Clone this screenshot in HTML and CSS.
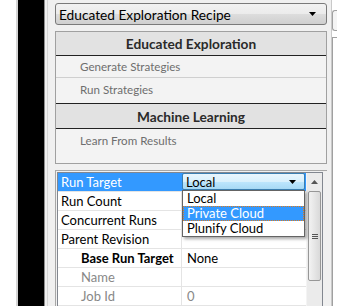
FILE: index.html
```html
<!DOCTYPE html>
<html>
<head>
<meta charset="utf-8">
<link rel="stylesheet" href="styles.css">
</head>
<body>
<div class="app">
  <div class="gutter"></div>
  <div class="dark"></div>
  <div class="main">
    <div class="inner">
      <div class="combo">
        <span>Educated Exploration Recipe</span>
        <svg class="arrow" width="8" height="4" viewBox="0 0 8 4"><path d="M0 0H7L3.5 4Z" fill="#000"/></svg>
      </div>
      <div class="panel">
        <div class="hdr">Educated Exploration</div>
        <div class="item">Generate Strategies</div>
        <div class="item last">Run Strategies</div>
        <div class="hdr hdr2">Machine Learning</div>
        <div class="item tall">Learn From Results</div>
      </div>
      <div class="gridwrap">
        <div class="grid">
          <div class="rows">
            <div class="row sel"><div class="k">Run Target</div><div class="v"></div></div>
            <div class="row"><div class="k">Run Count</div><div class="v"></div></div>
            <div class="row"><div class="k">Concurrent Runs</div><div class="v"></div></div>
            <div class="row"><div class="k">Parent Revision</div><div class="v"></div></div>
            <div class="row"><div class="k sub b">Base Run Target</div><div class="v">None</div></div>
            <div class="row"><div class="k sub g">Name</div><div class="v"></div></div>
            <div class="row"><div class="k sub g">Job Id</div><div class="v g">0</div></div>
          </div>
          <div class="scroll">
            <svg class="up" width="7" height="4" viewBox="0 0 7 4"><path d="M0 4H7L3.5 0Z" fill="#555"/></svg>
            <div class="thumb"><div class="grip"><i></i><i></i><i></i></div></div>
          </div>
          <div class="cellcombo">
            <span>Local</span>
            <svg width="8" height="4" viewBox="0 0 8 4"><path d="M0 0H7L3.5 4Z" fill="#000"/></svg>
          </div>
          <div class="list">
            <div class="opt">Local</div>
            <div class="opt hl">Private Cloud</div>
            <div class="opt">Plunify Cloud</div>
          </div>
        </div>
      </div>
    </div>
  </div>
  <div class="side">
    <div class="btn"></div>
    <div class="box"></div>
  </div>
</div>
</body>
</html>
```
FILE: styles.css
```css
html, body { margin: 0; padding: 0; }
* { box-sizing: border-box; }
body { width: 337px; height: 306px; overflow: hidden; background: #fff;
  font-family: Lato, "Open Sans", sans-serif; font-size: 12px; color: #000; }
.app { display: flex; height: 306px; }
.gutter { width: 18px; background: #fff; border-right: 2px solid #d4d4d4; }
.dark { width: 26px; background: #000; }
.main { width: 288px; background: #f0f0f0; border-left: 1px solid #8e8e8e; display: flex; }
.inner { flex: 1; margin-left: 2px; border-left: 1px solid #d6d6d6; padding: 3px 4px 0 7px; display: flex; flex-direction: column; border-right: 1px solid #c9c9c9; }
.combo { height: 22px; flex: none; border: 1px solid #7a7a7a; border-radius: 3px; background: linear-gradient(#f2f2f2, #ebebeb 50%, #dddddd 51%, #cfcfcf);
  display: flex; align-items: center; justify-content: space-between; padding: 0 9px 0 3px; font-size: 13.7px; }
.panel { margin-top: 6px; flex: none; border: 1px solid #a0a0a0; background: #f3f3f3; height: 133px; }
.hdr { height: 24px; background: #e2e2e2; border-bottom: 1px solid #222; display: flex; align-items: center; justify-content: center;
  font-weight: bold; font-size: 13.7px; color: #2a2a2a; }
.hdr2 { border-top: 1px solid #222; margin-top: 2px; height: 26px; }
.item { height: 22px; border-bottom: 1px solid #cfcfcf; padding-left: 24px; display: flex; align-items: center; color: #6e6e6e; font-size: 11.6px; }
.item.last { border-bottom: none; height: 23px; }
.item.tall { border-bottom: none; height: 23px; }
.gridwrap { margin-top: 6px; border: 1px solid #a7a7a7; border-right: none; padding: 1px 4px 0 1px; background: #f0f0f0; flex: 1; }
.grid { position: relative; border: 1px solid #828790; border-bottom: none; background: #fff; height: 100%; display: flex; }
.rows { flex: 1; }
.row { display: flex; height: 19px; border-bottom: 1px solid #e4e4e4; }
.row .k { width: 124px; padding-left: 3px; display: flex; align-items: center; font-size: 13px; border-right: 1px solid #e4e4e4; }
.row .v { flex: 1; display: flex; align-items: center; padding-left: 5px; font-size: 13px; }
.row.sel { background: #3399ff; color: #fff; }
.row.sel .k { border-right-color: #3399ff; }
.k.sub { padding-left: 23px; }
.b { font-weight: bold; }
.g { color: #888; }
.scroll { width: 16px; background: #ebebeb; border-left: 1px solid #f4f4f4; position: relative; }
.up { position: absolute; left: 4px; top: 7px; }
.thumb { position: absolute; left: 1px; top: 18px; width: 13px; height: 90px; border: 1px solid #979797; border-radius: 2px;
  background: linear-gradient(90deg, #f3f3f3, #e6e6e6 50%, #d9d9d9); display: flex; align-items: center; justify-content: center; }
.grip { display: flex; flex-direction: column; gap: 1px; }
.grip i { display: block; width: 6px; height: 1px; background: #555; }
.cellcombo { position: absolute; left: 124px; top: 0; width: 123px; height: 17px; border: 1px solid #3c7fb1; border-radius: 2px;
  background: linear-gradient(#eaf6fd, #d9f0fc 50%, #bee6fd 51%, #a7d9f5); display: flex; align-items: center; justify-content: space-between;
  padding: 0 7px 0 3px; font-size: 13px; }
.list { position: absolute; left: 124px; top: 17px; width: 123px; border: 1px solid #646464; background: #fff; box-shadow: 2px 2px 3px rgba(0,0,0,0.35); }
.opt { height: 15px; line-height: 13px; padding-left: 3px; font-size: 13px; border: 1px solid transparent; }
.opt.hl { background: #3399ff; color: #fff; border: 1px dotted #e07a1a; }
.side { flex: 1; background: #fff; display: flex; flex-direction: column; padding-top: 10px; }
.btn { height: 21px; flex: none; border: 1px solid #a0a0a0; border-right: none; border-radius: 3px 0 0 3px; background: #f4f4f4; }
.box { margin-top: 6px; flex: 1; border-left: 1px solid #a0a0a0; border-top: 1px solid #a0a0a0; background: #fff; }
```
